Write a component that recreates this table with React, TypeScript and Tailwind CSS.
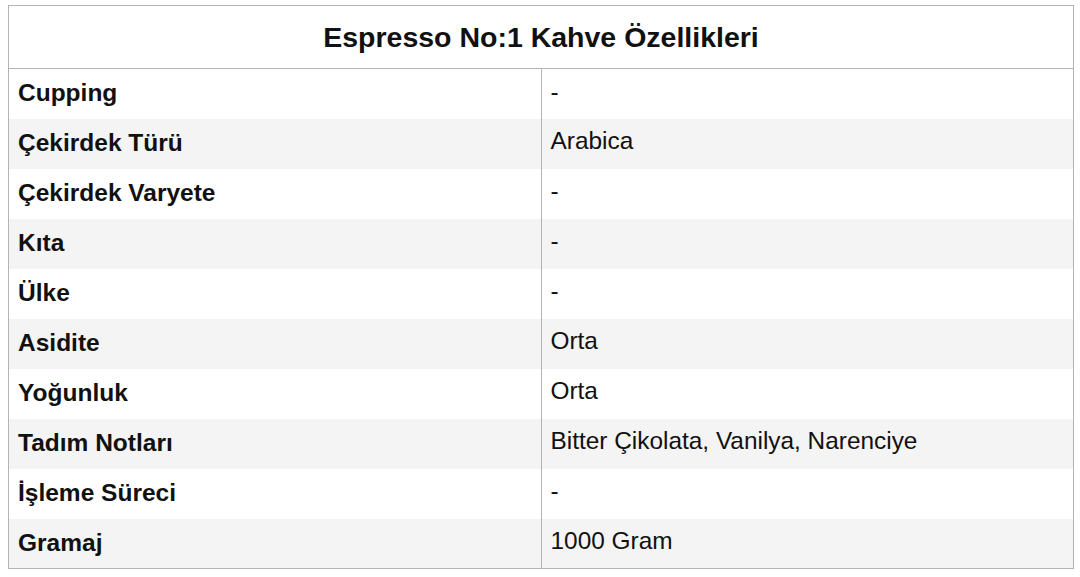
const rows = [
  { label: "Cupping", value: "-" },
  { label: "Çekirdek Türü", value: "Arabica" },
  { label: "Çekirdek Varyete", value: "-" },
  { label: "Kıta", value: "-" },
  { label: "Ülke", value: "-" },
  { label: "Asidite", value: "Orta" },
  { label: "Yoğunluk", value: "Orta" },
  { label: "Tadım Notları", value: "Bitter Çikolata, Vanilya, Narenciye" },
  { label: "İşleme Süreci", value: "-" },
  { label: "Gramaj", value: "1000 Gram" },
];

export default function App() {
  return (
    <div className="w-[1080px] h-[577px] bg-white pt-[5px] pl-[8px] font-['Liberation_Sans',Arial,sans-serif] text-[#111]">
      <table className="w-[1066px] border-collapse table-fixed border-b border-[#b3b3b3]">
        <thead>
          <tr>
            <th
              colSpan={2}
              className="h-[63px] border border-[#b3b3b3] text-center text-[28.5px] font-bold"
            >
              Espresso No:1 Kahve Özellikleri
            </th>
          </tr>
        </thead>
        <tbody>
          {rows.map((row, i) => (
            <tr key={row.label} className={i % 2 === 1 ? "bg-[#f4f4f4]" : "bg-white"}>
              <td className="h-[50px] w-1/2 border-l border-[#b3b3b3] pl-[9px] pb-[1px] text-[24.5px] font-bold leading-none">
                {row.label}
              </td>
              <td className="h-[50px] w-1/2 border-l border-r border-[#b3b3b3] pl-[9px] pb-[4px] text-[24.4px] leading-none">
                {row.value}
              </td>
            </tr>
          ))}
        </tbody>
      </table>
    </div>
  );
}
